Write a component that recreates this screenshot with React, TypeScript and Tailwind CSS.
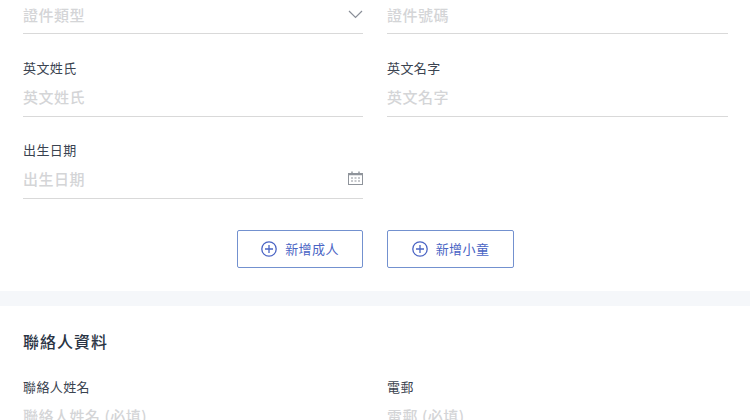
import { ReactNode } from 'react';

const font = 'font-["Noto_Sans_CJK_TC","Noto_Sans",sans-serif]';

function Chevron() {
  return (
    <svg width="15" height="9" viewBox="0 0 15 9" fill="none" stroke="#8a8f98" strokeWidth="1.2" className="-mt-[2px]">
      <path d="M1 1l6.5 6.5L14 1" />
    </svg>
  );
}

function CalendarIcon() {
  return (
    <svg width="15" height="14" viewBox="0 0 15 14" fill="none" stroke="#8f949b" strokeWidth="1" className="-mt-[2px]">
      <rect x="0.5" y="2.5" width="14" height="11" />
      <path d="M0.5 3.5h14M4 0.5v2.5M11 0.5v2.5" strokeWidth="1.4" />
      <path d="M3 7h2M6.5 7h2M10 7h2M3 10h2M6.5 10h2M10 10h2" strokeWidth="1.2" />
    </svg>
  );
}

function PlusCircle() {
  return (
    <svg width="16" height="16" viewBox="0 0 16 16" fill="none" stroke="#4a64c4" strokeWidth="1.3">
      <circle cx="8" cy="8" r="7.2" />
      <path d="M8 4v8M4 8h8" />
    </svg>
  );
}

function InputLine({ text, icon, short }: { text: string; icon?: ReactNode; short?: boolean }) {
  return (
    <div className={`flex items-center justify-between border-b border-[#d9d9d9] ${short ? 'h-[34px] pb-[2px]' : 'h-[39px] pt-[0.5px]'}`}>
      <span className="text-[15px] font-medium tracking-[0.5px] text-[#d4d5d7]">{text}</span>
      {icon}
    </div>
  );
}

function Field({ label, text, icon }: { label: string; text: string; icon?: ReactNode }) {
  return (
    <div>
      <div className="h-5 text-[13px] leading-5 tracking-[0.4px] text-[#3a4350]">{label}</div>
      <InputLine text={text} icon={icon} />
    </div>
  );
}

function AddButton({ text, w }: { text: string; w: string }) {
  return (
    <button className={`flex h-[38px] items-center justify-center gap-2 rounded-[2px] border border-[#7391cf] bg-white ${w}`}>
      <PlusCircle />
      <span className="text-[13px] tracking-[0.4px] text-[#4a64c4]">{text}</span>
    </button>
  );
}

export default function App() {
  return (
    <div className={`h-[420px] w-[750px] overflow-hidden bg-white ${font}`}>
      <div className="grid grid-cols-[340px_341px] gap-x-6 gap-y-[23.5px] pl-[23px]">
        <InputLine short text="證件類型" icon={<Chevron />} />
        <InputLine short text="證件號碼" />
        <Field label="英文姓氏" text="英文姓氏" />
        <Field label="英文名字" text="英文名字" />
        <Field label="出生日期" text="出生日期" icon={<CalendarIcon />} />
      </div>
      <div className="mt-[31px] flex justify-center gap-6 pl-[1px]">
        <AddButton text="新增成人" w="w-[126px]" />
        <AddButton text="新增小童" w="w-[127px]" />
      </div>
      <div className="mt-[23px] h-[15px] bg-[#f5f7fa]" />
      <h2 className="mt-[23px] pl-[23px] text-[16px] leading-[24px] font-medium tracking-[1px] text-[#2a3444]">聯絡人資料</h2>
      <div className="mt-[24px] grid grid-cols-[340px_341px] gap-x-6 pl-[23px]">
        <Field label="聯絡人姓名" text="聯絡人姓名 (必填)" />
        <Field label="電郵" text="電郵 (必填)" />
      </div>
    </div>
  );
}
